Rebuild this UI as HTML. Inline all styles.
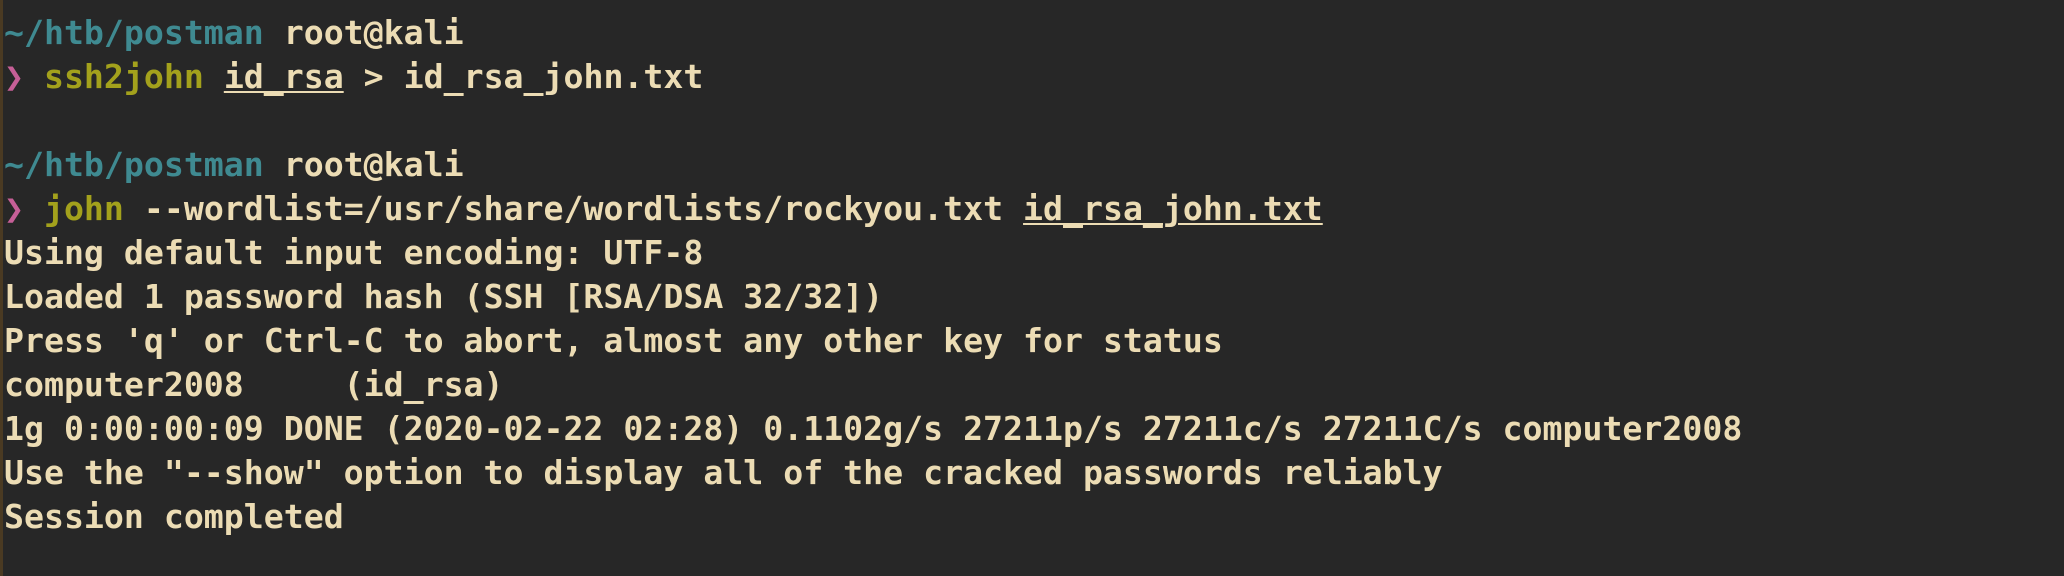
<!DOCTYPE html>
<html><head><meta charset="utf-8"><style>
html,body{margin:0;padding:0;background:#272727;width:2064px;height:576px;overflow:hidden;}
.edge{position:absolute;left:0;top:0;width:3px;height:576px;background:#4a3a22;}
pre{position:absolute;left:4px;top:11px;margin:0;font-family:"DejaVu Sans Mono","Liberation Mono",monospace;font-weight:bold;font-size:33.2px;line-height:44px;color:#ecdcb4;letter-spacing:0;}
.t{color:#3f8a91}.p{color:#c65f97}.y{color:#a3a11c}
u{text-decoration:underline;text-underline-offset:3px;text-decoration-thickness:2px}
</style></head><body><div class="edge"></div><pre><span class="t">~/htb/postman</span> root@kali
<span class="p">❯</span> <span class="y">ssh2john</span> <u>id_rsa</u> &gt; id_rsa_john.txt

<span class="t">~/htb/postman</span> root@kali
<span class="p">❯</span> <span class="y">john</span> --wordlist=/usr/share/wordlists/rockyou.txt <u>id_rsa_john.txt</u>
Using default input encoding: UTF-8
Loaded 1 password hash (SSH [RSA/DSA 32/32])
Press 'q' or Ctrl-C to abort, almost any other key for status
computer2008     (id_rsa)
1g 0:00:00:09 DONE (2020-02-22 02:28) 0.1102g/s 27211p/s 27211c/s 27211C/s computer2008
Use the "--show" option to display all of the cracked passwords reliably
Session completed</pre></body></html>
